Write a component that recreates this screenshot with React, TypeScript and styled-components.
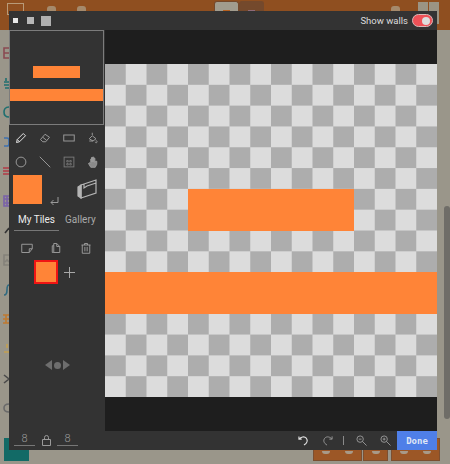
import React from "react";
import styled, { createGlobalStyle } from "styled-components";

const GlobalStyle = createGlobalStyle`
  html, body { margin: 0; padding: 0; }
  body { font-family: "Roboto", "Liberation Sans", sans-serif; }
  * { box-sizing: border-box; }
`;

const Page = styled.div`
  position: relative;
  width: 450px;
  height: 464px;
  overflow: hidden;
  display: flex;
  flex-direction: column;
  background: #9a968a;
`;

const Header = styled.div`
  height: 30px;
  flex: none;
  display: flex;
  align-items: flex-start;
  background: #8f4f20;
`;

const HeaderGlyph = styled.span<{ $left: number }>`
  width: 9px;
  height: 5px;
  margin: 6px 0 0 ${(p) => p.$left}px;
  background: #a58a6c;
  border-radius: 3px 3px 0 0;
`;

const HeaderBox = styled.span`
  width: 17px;
  height: 12px;
  margin: 3px 0 0 7px;
  border: 1px solid #b89a78;
`;

const HeaderTab = styled.div<{ $active?: boolean; $left?: number }>`
  width: 25px;
  height: 12px;
  margin: 1px 0 0 ${(p) => p.$left ?? 0}px;
  display: flex;
  justify-content: center;
  align-items: flex-end;
  background: ${(p) => (p.$active ? "#a19c8e" : "#74492c")};
  border: 1px solid #74492c;
  border-bottom: 0;
  border-radius: 3px 3px 0 0;
`;

const TabMark = styled.span<{ $color: string }>`
  width: 7px;
  height: 3px;
  background: ${(p) => p.$color};
`;

const HeaderSquare = styled.span<{ $left: number }>`
  width: 10px;
  height: 22px;
  margin: 2px 0 0 ${(p) => p.$left}px;
  background: #9b9484;
`;

const Main = styled.div`
  flex: 1;
  min-height: 0;
  display: flex;
`;

const Rail = styled.div`
  display: flex;
  flex-direction: column;
  gap: 17.6px;
  padding: 17px 0 0 3px;
`;

const RailGlyph = styled.svg<{ $color: string }>`
  display: block;
  width: 6px;
  height: 12px;
  fill: none;
  stroke: ${(p) => p.$color};
  stroke-width: 1.600;
`;

const Scrollbar = styled.div`
  width: 6px;
  height: 213px;
  margin: 176px 0 0 auto;
  border-radius: 3px;
  background: #6f6d68;
`;

const Footer = styled.div`
  height: 26px;
  flex: none;
  display: flex;
  padding-left: 4px;
`;

const TealButton = styled.div`
  width: 25px;
  height: 23px;
  background: #126a66;
`;

const OrangeButton = styled.div<{ $width: number; $left: number }>`
  width: ${(p) => p.$width}px;
  height: 23px;
  margin-left: ${(p) => p.$left}px;
  padding-top: 12px;
  display: flex;
  justify-content: space-around;
  background: #9c5726;
  border: 1px solid #7c4f30;
`;

const ButtonMark = styled.span`
  width: 8px;
  height: 3px;
  border-radius: 0 0 4px 4px;
  background: #a89a88;
`;

const Modal = styled.div`
  position: absolute;
  left: 9px;
  top: 11px;
  width: 428px;
  height: 439px;
  display: flex;
  flex-direction: column;
  background: #333333;
`;

const TopBar = styled.div`
  height: 19px;
  flex: none;
  display: flex;
  align-items: center;
  gap: 7px;
  padding: 0 4px;
  background: #333333;
`;

const SizeDot = styled.span<{ $size: number; $color: string }>`
  width: ${(p) => p.$size}px;
  height: ${(p) => p.$size}px;
  background: ${(p) => p.$color};
  &:first-child {
    margin-right: 2px;
  }
`;

const WallsLabel = styled.span`
  margin-left: auto;
  color: #dcdcdc;
  font-size: 9.500px;
`;

const Toggle = styled.div`
  width: 21px;
  height: 13px;
  margin-left: -3px;
  padding: 1px 2px;
  display: flex;
  align-items: center;
  justify-content: flex-end;
  border-radius: 7px;
  background: #ee5157;
  border: 1px solid #d8b8b8;
`;

const ToggleKnob = styled.span`
  width: 8px;
  height: 8px;
  border-radius: 50%;
  background: #dddddd;
`;

const Body = styled.div`
  flex: 1;
  min-height: 0;
  display: flex;
`;

const Side = styled.div`
  width: 96px;
  flex: none;
  display: flex;
  flex-direction: column;
`;

const Preview = styled.div`
  width: 95px;
  height: 95px;
  flex: none;
  border: 1px solid #7c7c7c;
  display: grid;
  grid-template-columns: repeat(16, 1fr);
  grid-template-rows: repeat(16, 1fr);
`;

const Tile = styled.div<{ $col: string; $row: string }>`
  grid-column: ${(p) => p.$col};
  grid-row: ${(p) => p.$row};
  background: #ff8437;
`;

const Tools = styled.div`
  display: grid;
  grid-template-columns: repeat(4, 24px);
  grid-auto-rows: 24px;
  justify-items: center;
  align-items: center;
  padding-top: 1px;
`;

const ToolIcon = styled.svg<{ $bright?: boolean }>`
  width: 12px;
  height: 12px;
  fill: none;
  stroke: ${(p) => (p.$bright ? "#e6e6e6" : "#9a9a9a")};
  stroke-width: 1.300;
`;

const ColorRow = styled.div`
  height: 33px;
  flex: none;
  display: flex;
  margin: 1px 0 0 4px;
`;

const Swatch = styled.div`
  width: 29px;
  height: 29px;
  background: #ff8437;
`;

const ReturnIcon = styled.svg`
  width: 9px;
  height: 9px;
  margin: 22px 0 0 8px;
  fill: none;
  stroke: #9a9a9a;
`;

const BoxIcon = styled.svg`
  width: 20px;
  height: 20px;
  margin: 4px 0 0 18px;
  fill: none;
  stroke: #b5b5b5;
  stroke-width: 1.200;
`;

const Tabs = styled.div`
  display: flex;
  height: 22px;
  flex: none;
  margin-top: 2px;
  padding-left: 5px;
`;

const TabLabel = styled.div<{ $active?: boolean }>`
  width: ${(p) => (p.$active ? "45px" : "auto")};
  margin-left: ${(p) => (p.$active ? 0 : "6px")};
  height: 21px;
  font-size: 10px;
  line-height: 19px;
  text-align: center;
  color: ${(p) => (p.$active ? "#ececec" : "#aaaaaa")};
  border-bottom: ${(p) => (p.$active ? "1px solid #777777" : "0")};
`;

const TileActions = styled.div`
  display: grid;
  grid-template-columns: repeat(3, 29.500px);
  padding: 10px 0 0 3px;
  justify-items: center;
`;

const TileRow = styled.div`
  display: flex;
  align-items: center;
  padding: 6px 0 0 25px;
`;

const TileThumb = styled.div`
  width: 24px;
  height: 24px;
  background: #ff8437;
  border: 2px solid #f01414;
`;

const PlusIcon = styled.svg`
  width: 11px;
  height: 11px;
  margin-left: 6px;
  stroke: #a8a8a8;
`;

const Pager = styled.div`
  margin-top: 76px;
  display: flex;
  align-items: center;
  justify-content: center;
  gap: 1px;
`;

const Arrow = styled.span<{ $dir: "left" | "right" }>`
  width: 0;
  height: 0;
  border-top: 5px solid transparent;
  border-bottom: 5px solid transparent;
  ${(p) =>
    p.$dir === "left"
      ? "border-right: 7px solid #6e6e6e;"
      : "border-left: 7px solid #6e6e6e;"}
`;

const PagerDot = styled.span`
  width: 7px;
  height: 7px;
  margin: 0 1px;
  border-radius: 50%;
  background: #6e6e6e;
`;

const Canvas = styled.div`
  width: 332px;
  flex: none;
  display: flex;
  flex-direction: column;
  background: #1e1e1e;
`;

const Board = styled.div`
  margin-top: 34px;
  height: 333px;
  display: grid;
  grid-template-columns: repeat(16, 1fr);
  grid-template-rows: repeat(16, 1fr);
  background-color: #dcdcdc;
  background-image: conic-gradient(
    transparent 25%,
    #adadad 0 50%,
    transparent 0 75%,
    #adadad 0
  );
  background-size: 41.500px 41.625px;
`;

const BottomBar = styled.div`
  height: 19px;
  flex: none;
  display: flex;
  align-items: center;
  background: #333333;
`;

const SizeGroup = styled.div`
  width: 96px;
  flex: none;
  align-self: stretch;
  display: flex;
  align-items: flex-start;
  padding: 2px 0 0 5px;
`;

const SizeField = styled.div`
  width: 21px;
  height: 13px;
  border-bottom: 1px solid #777777;
  color: #9a9a9a;
  font-size: 11px;
  font-weight: 300;
  line-height: 12px;
  text-align: center;
`;

const LockIcon = styled.svg`
  width: 9px;
  height: 11px;
  margin: 2px 6px 0 7px;
  fill: none;
  stroke: #9a9a9a;
`;

const BarTools = styled.div`
  flex: 1;
  display: flex;
  align-items: center;
  justify-content: flex-end;
`;

const BarIcon = styled.svg<{ $bright?: boolean; $gap: number }>`
  width: 11px;
  height: 11px;
  margin-right: ${(p) => p.$gap}px;
  fill: none;
  stroke: ${(p) => (p.$bright ? "#e0e0e0" : "#9a9a9a")};
`;

const Divider = styled.span`
  width: 1px;
  height: 9px;
  margin-right: 12px;
  background: #8a8a8a;
`;

const DoneButton = styled.button`
  width: 40px;
  height: 19px;
  border: 0;
  padding: 0;
  background: #4f7fe8;
  color: #dfe6f5;
  font-family: "DejaVu Sans Mono", monospace;
  font-weight: 700;
  font-size: 9px;
`;

// what shows of the page's side menu icons beside the dialog
const railIcons = [
  { color: "#8a4a52", d: "M6 1H1v10h5M1 6h5" },
  { color: "#1f6f70", d: "M3 1v3M1 5h5M1 8h5M2 11h4" },
  { color: "#1f6f70", d: "M6 1C2 1 1 4 1 6s1 5 5 5" },
  { color: "#3f72b0", d: "M1 2h3c2 0 2 1 2 4s0 4-2 4H1" },
  { color: "#b33a46", d: "M0 3h6M0 6h6M0 9h6" },
  { color: "#7a62a8", d: "M6 1H1v10h5M1 4h5M1 8h5M4 1v10" },
  { color: "#333333", d: "M6 3L2 8" },
  { color: "#85827a", d: "M6 1H1v10h5M2 8l2-2 2 2" },
  { color: "#2f6a80", d: "M6 1C4 1 4 4 4 6s0 5-3 5" },
  { color: "#c07a30", d: "M0 2h6M3 2v8M0 6h6M0 10h6" },
  { color: "#c4a050", d: "M4 1v4M1 9h5" },
  { color: "#4a4a4a", d: "M1 2l5 4-5 4" },
  { color: "#6a6a6a", d: "M6 2C2 2 1 4 1 6s1 4 5 4" },
];

export default function App() {
  return (
    <Page>
      <GlobalStyle />
      <Header>
        <HeaderBox />
        <HeaderGlyph $left={23} />
        <HeaderGlyph $left={21} />
        <HeaderTab $active $left={128}>
          <TabMark $color="#b5601f" />
        </HeaderTab>
        <HeaderTab>
          <TabMark $color="#8f6a78" />
        </HeaderTab>
        <HeaderGlyph $left={127} />
        <HeaderSquare $left={18} />
        <HeaderSquare $left={1} />
      </Header>
      <Main>
        <Rail>
          {railIcons.map((icon) => (
            <RailGlyph key={icon.d} $color={icon.color} viewBox="0 0 6 12">
              <path d={icon.d} />
            </RailGlyph>
          ))}
        </Rail>
        <Scrollbar />
      </Main>
      <Footer>
        <TealButton />
        <OrangeButton $width={49} $left={284}>
          <ButtonMark />
          <ButtonMark />
        </OrangeButton>
        <OrangeButton $width={25} $left={1}>
          <ButtonMark />
        </OrangeButton>
        <OrangeButton $width={49} $left={3}>
          <ButtonMark />
          <ButtonMark />
        </OrangeButton>
      </Footer>
      <Modal>
        <TopBar>
          <SizeDot $size={5} $color="#e8e8e8" />
          <SizeDot $size={7} $color="#b8b8b8" />
          <SizeDot $size={10} $color="#b0b0b0" />
          <WallsLabel>Show walls</WallsLabel>
          <Toggle>
            <ToggleKnob />
          </Toggle>
        </TopBar>
        <Body>
          <Side>
            <Preview>
              <Tile $col="5 / 13" $row="7 / 9" />
              <Tile $col="1 / 17" $row="11 / 13" />
            </Preview>
            <Tools>
              <ToolIcon $bright viewBox="0 0 16 16">
                <path d="M2 14l1-4 8-8 3 3-8 8-4 1zM3 10l3 3" />
              </ToolIcon>
              <ToolIcon viewBox="0 0 16 16">
                <path d="M2 10l6-7 6 4-5 6H5zM5 7l5 4" />
              </ToolIcon>
              <ToolIcon viewBox="0 0 16 16">
                <rect x="1" y="4" width="14" height="8" />
              </ToolIcon>
              <ToolIcon viewBox="0 0 16 16">
                <path d="M7 1v3M3 9l4-4 5 4-4 3zM12 11c1 1 2 2 1 3s-2 0-2-1M3 12h5" />
              </ToolIcon>
              <ToolIcon viewBox="0 0 16 16">
                <circle cx="8" cy="8" r="6.500" />
              </ToolIcon>
              <ToolIcon viewBox="0 0 16 16">
                <path d="M1 1l14 14" />
              </ToolIcon>
              <ToolIcon viewBox="0 0 16 16">
                <rect x="1.500" y="1.500" width="13" height="13" stroke="#777777" />
                <path d="M5 6h2v2H5zM9 6h2v2H9zM5 10h2v2H5zM9 10h2v2H9z" strokeWidth="0.700" />
              </ToolIcon>
              <ToolIcon viewBox="0 0 16 16">
                <path
                  d="M5 15l-3-5 1-1 2 1V4h1v4-6h1.500v6V1.500H9V8 3h1.500v6l1-2h1.500v4l-2 4z"
                  fill="#8a8a8a"
                />
              </ToolIcon>
            </Tools>
            <ColorRow>
              <Swatch />
              <ReturnIcon viewBox="0 0 9 9">
                <path d="M8 0v5.500H1M3.500 3L1 5.500 3.500 8" />
              </ReturnIcon>
              <BoxIcon viewBox="0 0 20 20">
                <path d="M1 8l3-2v13l-3-2z" fill="#b5b5b5" />
                <path d="M4 6l15-5v13L4 19zM7 5v4l3-2 9-3" />
              </BoxIcon>
            </ColorRow>
            <Tabs>
              <TabLabel $active>My Tiles</TabLabel>
              <TabLabel>Gallery</TabLabel>
            </Tabs>
            <TileActions>
              <ToolIcon viewBox="0 0 16 16">
                <path d="M1 3h14v6l-4 5H1zM11 14v-5h4" />
              </ToolIcon>
              <ToolIcon viewBox="0 0 16 16">
                <path d="M5 2h4l4 4v8H5zM9 2v4h4M5 5H3v9h2" />
              </ToolIcon>
              <ToolIcon viewBox="0 0 16 16">
                <path d="M2 4h12M6 4V2h4v2M3 4v11h10V4M6.500 6.500v6M9.500 6.500v6" />
              </ToolIcon>
            </TileActions>
            <TileRow>
              <TileThumb />
              <PlusIcon viewBox="0 0 11 11">
                <path d="M5.500 0v11M0 5.500h11" />
              </PlusIcon>
            </TileRow>
            <Pager>
              <Arrow $dir="left" />
              <PagerDot />
              <Arrow $dir="right" />
            </Pager>
          </Side>
          <Canvas>
            <Board>
              <Tile $col="5 / 13" $row="7 / 9" />
              <Tile $col="1 / 17" $row="11 / 13" />
            </Board>
          </Canvas>
        </Body>
        <BottomBar>
          <SizeGroup>
            <SizeField>8</SizeField>
            <LockIcon viewBox="0 0 9 11">
              <path d="M.500 4.500h8v6h-8zM2.500 4.500V2.500a2 2 0 0 1 4 0v2" />
            </LockIcon>
            <SizeField>8</SizeField>
          </SizeGroup>
          <BarTools>
            <BarIcon $bright $gap={13} viewBox="0 0 12 12">
              <path d="M1 1.500v3h3M1.200 4.500C3 2 7 1 9 3.500s1 5.500-2.500 7.500" strokeWidth="1.200" />
            </BarIcon>
            <BarIcon $gap={10} viewBox="0 0 12 12">
              <path d="M11 1.500v3H8M10.800 4.500C9 2 5 1 3 3.500s-1 5.500 2.500 7.500" />
            </BarIcon>
            <Divider />
            <BarIcon $gap={13} viewBox="0 0 12 12">
              <circle cx="4.500" cy="4.500" r="3.500" />
              <path d="M7 7l4.500 4.500M3 4.500h3" />
            </BarIcon>
            <BarIcon $gap={6} viewBox="0 0 12 12">
              <circle cx="4.500" cy="4.500" r="3.500" />
              <path d="M7 7l4.500 4.500M3 4.500h3M4.500 3v3" />
            </BarIcon>
            <DoneButton>Done</DoneButton>
          </BarTools>
        </BottomBar>
      </Modal>
    </Page>
  );
}
